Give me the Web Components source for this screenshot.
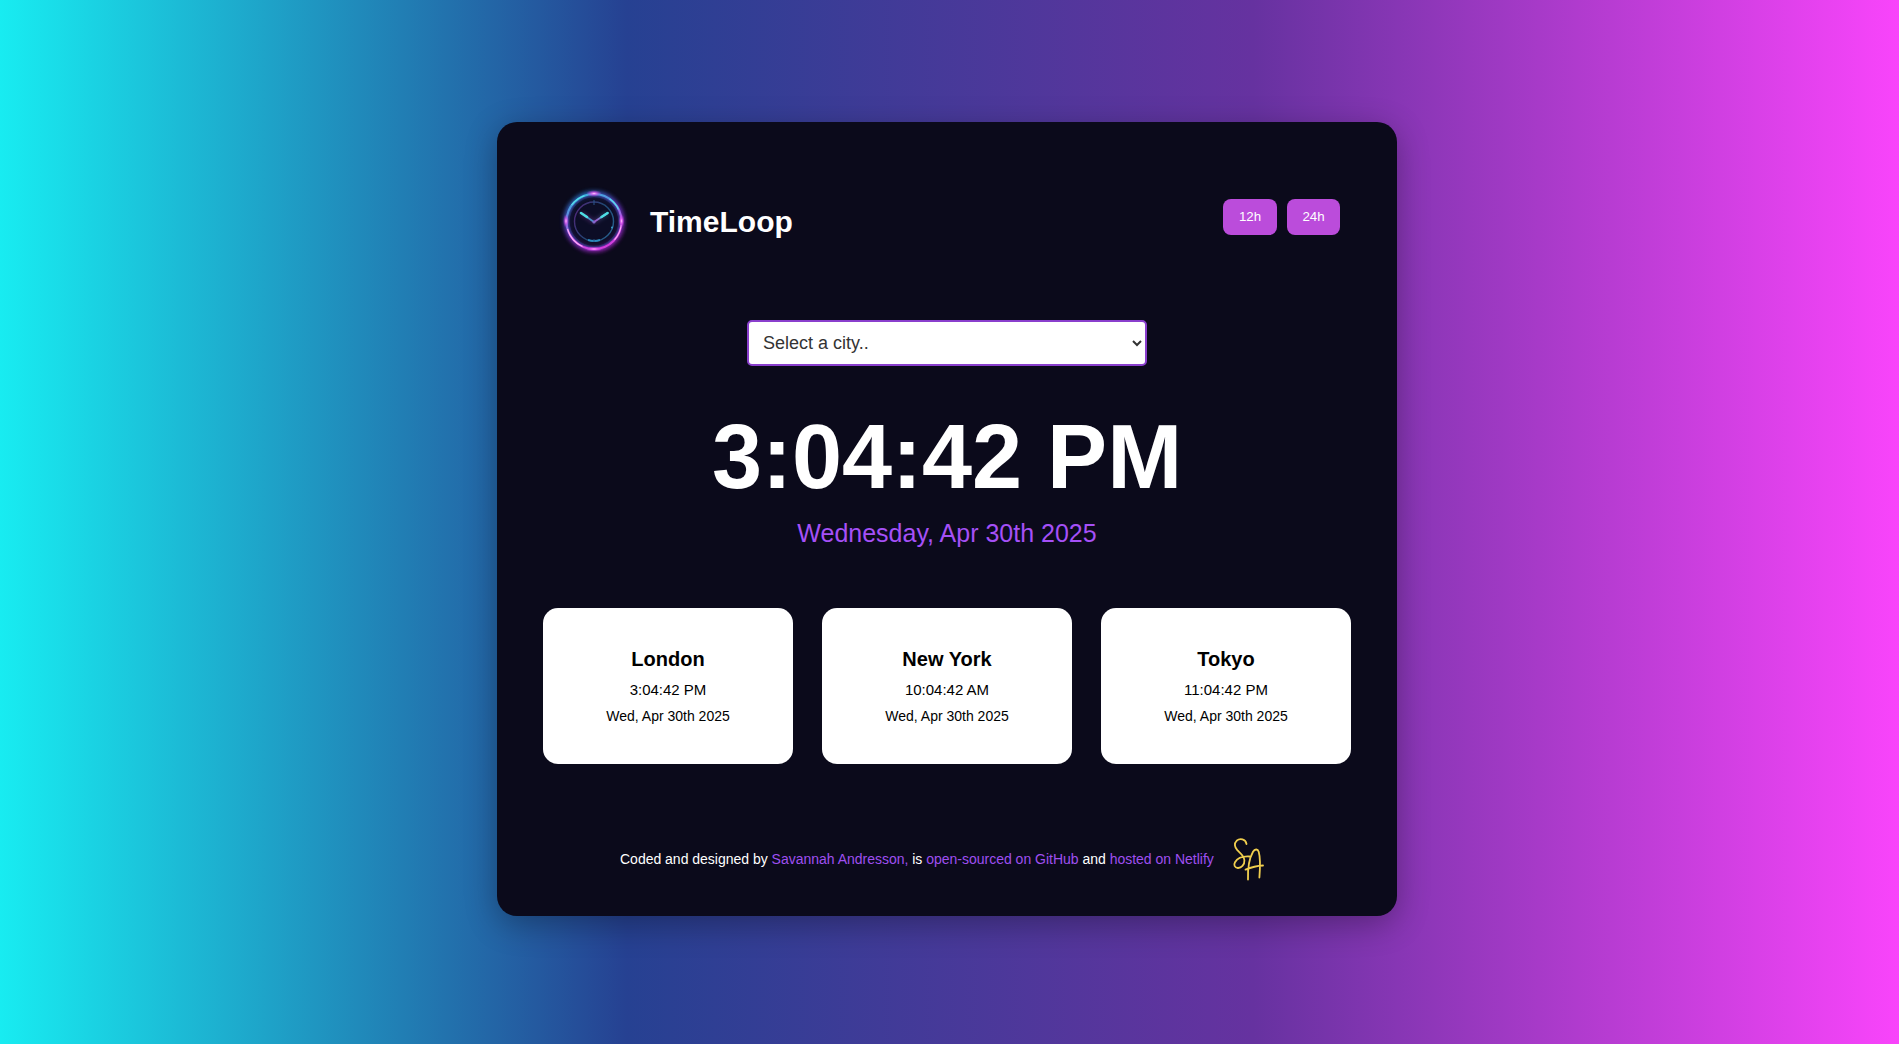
<!DOCTYPE html>
<html lang="en">
<head>
<meta charset="utf-8">
<title>TimeLoop</title>
<style>
html,body{margin:0;height:100%;overflow:hidden}
body{font-family:"Liberation Sans",Arial,sans-serif;background:linear-gradient(to right,#18ecf1 0%,#264192 33%,#6632a0 66%,#f944fb 100%)}
</style>
</head>
<body>
<time-loop-app></time-loop-app>
<script>
const define = (name, html) => customElements.define(name, class extends HTMLElement {
  constructor() {
    super();
    const t = document.createElement('template');
    t.innerHTML = html;
    this.attachShadow({ mode: 'open' }).append(t.content.cloneNode(true));
  }
});

define('clock-logo', `
<style>:host{display:block;width:90px;height:92px}svg{display:block}</style>
<svg width="90" height="92" viewBox="0 0 90 92" fill="none">
  <defs>
    <linearGradient id="ring" x1=".25" y1="0" x2=".6" y2="1">
      <stop offset="0" stop-color="#35b9e0"/><stop offset=".35" stop-color="#6a80df"/>
      <stop offset=".62" stop-color="#b45ce6"/><stop offset="1" stop-color="#d43ddc"/>
    </linearGradient>
    <linearGradient id="glow" x1=".2" y1="0" x2=".7" y2="1">
      <stop offset="0" stop-color="#2277c4"/><stop offset=".5" stop-color="#6a32c4"/><stop offset="1" stop-color="#a326c4"/>
    </linearGradient>
    <linearGradient id="inner" x1="0" y1=".3" x2="1" y2=".8">
      <stop offset="0" stop-color="#4a2a78"/><stop offset=".5" stop-color="#214672"/><stop offset="1" stop-color="#28608f"/>
    </linearGradient>
    <linearGradient id="hand" gradientUnits="userSpaceOnUse" x1="58" y1="38" x2="45" y2="47">
      <stop offset="0" stop-color="#4fe6ea"/><stop offset=".5" stop-color="#7593d8"/><stop offset="1" stop-color="#a84cc9"/>
    </linearGradient>
    <radialGradient id="flare"><stop offset="0" stop-color="#ffc5ff"/><stop offset=".35" stop-color="#e45cf0" stop-opacity=".8"/><stop offset="1" stop-color="#a632d8" stop-opacity="0"/></radialGradient>
    <filter id="soft" x="-30%" y="-30%" width="160%" height="160%"><feGaussianBlur stdDeviation="2.2"/></filter>
    <filter id="fine" x="-30%" y="-30%" width="160%" height="160%"><feGaussianBlur stdDeviation=".55"/></filter>
  </defs>
  <circle cx="44" cy="46.5" r="27.5" stroke="url(#glow)" stroke-width="6" opacity=".9" filter="url(#soft)"/>
  <circle cx="44" cy="46.5" r="25.5" fill="#0e0f2b" opacity=".75"/>
  <circle cx="44" cy="46.5" r="25.3" stroke="#37459a" stroke-width="2" opacity=".5" filter="url(#fine)"/>
  <circle cx="44" cy="46.5" r="27.5" stroke="url(#ring)" stroke-width="2.1" filter="url(#fine)"/>
  <path d="M17.5 54A27.5 27.5 0 0 0 32.5 71.5M64.5 64.8A27.5 27.5 0 0 0 71.2 50" stroke="#ffabf8" stroke-width="1.1" filter="url(#fine)"/>
  <path d="M21.5 30A27.5 27.5 0 0 1 34.5 20.7M59.5 23.8A27.5 27.5 0 0 1 68.5 34.5" stroke="#55e2ec" stroke-width="1.2" filter="url(#fine)"/>
  <circle cx="44" cy="46.5" r="19.5" stroke="url(#inner)" stroke-width="1.4" filter="url(#fine)"/>
  <path d="M38 65A19.5 19.5 0 0 0 50 65" stroke="#2b8bbd" stroke-width="2" filter="url(#fine)"/>
  <path d="M44 25v5M44 64v3" stroke="#28568c"/>
  <circle cx="62" cy="52.5" r="1" fill="#3b9bc9"/>
  <ellipse cx="44" cy="18.5" rx="8" ry="3.4" fill="url(#flare)"/>
  <ellipse cx="71.5" cy="46" rx="3.2" ry="7" fill="url(#flare)"/>
  <ellipse cx="16" cy="46" rx="3" ry="7" fill="url(#flare)"/>
  <ellipse cx="44" cy="74" rx="10" ry="2.5" fill="url(#flare)"/>
  <path d="M31 38 44 47 57.5 38" stroke="url(#hand)" stroke-width="3" opacity=".4" filter="url(#soft)"/>
  <path d="M35 40.8 44 47" stroke="#4a91c7" stroke-width="1.8"/>
  <path d="M31 38 37 42" stroke="#4ddde4" stroke-width="2.6" stroke-linecap="round"/>
  <path d="M44 47 57.5 38" stroke="url(#hand)" stroke-width="1.9"/>
  <path d="M51.5 42 57.7 38" stroke="#4ddde4" stroke-width="2.4" stroke-linecap="round"/>
  <circle cx="44" cy="47" r="1.6" fill="#8068cb"/>
</svg>`);

define('format-button', `
<style>
:host{display:block}
button{display:block;width:100%;box-sizing:border-box;height:36px;border:0;border-radius:8px;padding:0;background:#bb4cdb;color:#fff;font:13.333px/36px "Liberation Sans",Arial,sans-serif}
</style><button><slot></slot></button>`);

define('app-header', `
<style>
:host{display:flex;justify-content:space-between;align-items:flex-start;height:92px;padding:53px 57px 0 53px}
.brand{display:flex;align-items:center;gap:10px;height:92px}
h1{margin:0;padding-top:2px;color:#fff;font:700 30px/36px "Liberation Sans",Arial,sans-serif}
.formats{display:flex;gap:10px;padding-top:24px}
</style>
<div class="brand"><clock-logo></clock-logo><h1>TimeLoop</h1></div>
<div class="formats"><format-button style="width:54px">12h</format-button><format-button style="width:53px">24h</format-button></div>`);

define('city-select', `
<style>
:host{display:block;width:400px;height:46px;margin:53px auto 0}
select{display:block;width:400px;height:46px;box-sizing:border-box;border:2px solid #8a3fcd;border-radius:5px;background:#fff;color:#333;padding:0 0 0 10px;font:18px "Liberation Sans",Arial,sans-serif}
</style>
<select aria-label="City"><option>Select a city..</option></select>`);

define('main-clock', `
<style>
:host{display:flex;flex-direction:column;align-items:center;height:242px;white-space:nowrap}
.time{margin-top:39px;font-size:90px;line-height:104px;font-weight:700;color:#fff}
.date{margin-top:9px;font-size:25px;line-height:30px;color:#a550f7}
</style>
<div class="time"><slot name="time"></slot></div><div class="date"><slot name="date"></slot></div>`);

define('city-card', `
<style>
:host{display:flex;flex-direction:column;align-items:center;width:250px;height:156px;box-sizing:border-box;padding-top:39px;background:#fff;border-radius:15px;color:#000}
.name{font-size:20px;font-weight:700;line-height:24px}
.time{margin-top:10px;font-size:15px;line-height:18px}
.date{margin-top:9px;font-size:14px;line-height:16px}
</style>
<div class="name"><slot name="city"></slot></div><div class="time"><slot name="time"></slot></div><div class="date"><slot name="date"></slot></div>`);

define('signature-mark', `
<style>:host{display:block;width:34px;height:46px}svg{display:block}</style>
<svg width="34" height="46" viewBox="0 0 34 46" fill="none" stroke="#f0ce4e" stroke-width="1.8" stroke-linecap="round" stroke-linejoin="round">
  <path d="M14.5 7C13.5 2 8 .9 4.6 3.8C1.8 6.3 2.7 10.3 5.3 13.1C8 16 12.2 18.7 12.4 23.2C12.7 28 9.2 31.2 5.8 31C2.6 30.8 1.5 27.8 3 25.2C5.5 20.9 11.6 19.2 17.5 19.5"/>
  <path d="M16 42.5C15.7 33.5 17.2 21.5 21 14.8C22.7 12 25.7 11.5 26.7 14.7C28.3 20 28.1 31.5 27.4 40.5M13.5 32.6C19 30.3 25.5 28.7 31 28.5"/>
</svg>`);

define('app-footer', `
<style>
:host{display:flex;align-items:flex-start;margin-top:72px;padding-left:123px;color:#fff;font-size:14px;line-height:16px;white-space:nowrap}
p{margin:15px 0 0;letter-spacing:-.01px}a{color:#9f4ff0;text-decoration:none}
signature-mark{margin:1px 0 0 18px}
</style>
<p>Coded and designed by <a>Savannah Andresson,</a> is <a>open-sourced on GitHub</a> and <a>hosted on Netlify</a></p><signature-mark></signature-mark>`);

define('time-loop-app', `
<style>
:host{display:flex;justify-content:center;align-items:flex-start;height:100vh;box-sizing:border-box;padding:122px 5px 0 0}
main{width:900px;height:794px;border-radius:20px;background:#0b0a1b;box-shadow:0 8px 32px rgba(0,0,0,.3)}
.cities{display:flex;justify-content:center;gap:29px}
</style>
<main>
  <app-header></app-header>
  <city-select></city-select>
  <main-clock><span slot="time">3:04:42 PM</span><span slot="date">Wednesday, Apr 30th 2025</span></main-clock>
  <section class="cities">
    <city-card><span slot="city">London</span><span slot="time">3:04:42 PM</span><span slot="date">Wed, Apr 30th 2025</span></city-card>
    <city-card><span slot="city">New York</span><span slot="time">10:04:42 AM</span><span slot="date">Wed, Apr 30th 2025</span></city-card>
    <city-card><span slot="city">Tokyo</span><span slot="time">11:04:42 PM</span><span slot="date">Wed, Apr 30th 2025</span></city-card>
  </section>
  <app-footer></app-footer>
</main>`);
</script>
</body>
</html>
